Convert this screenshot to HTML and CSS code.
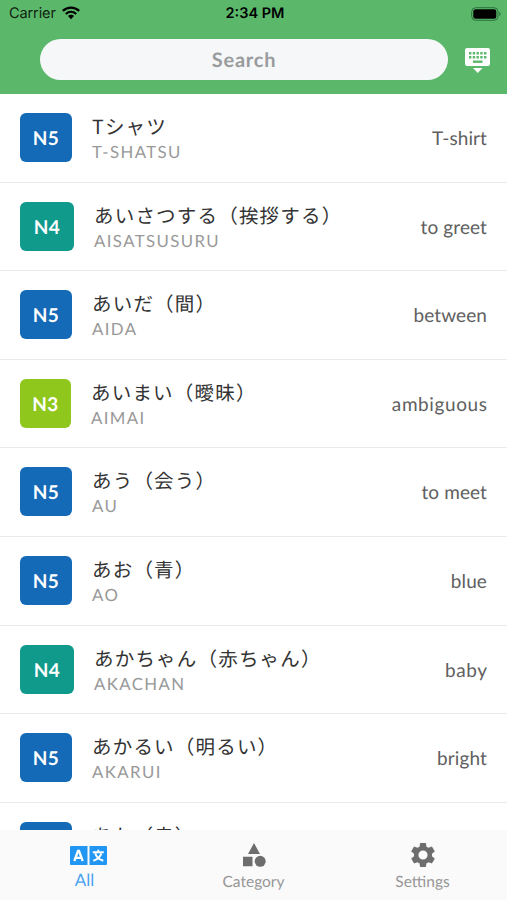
FILE: index.html
```html
<!DOCTYPE html>
<html lang="ja">
<head>
<meta charset="utf-8">
<meta name="viewport" content="width=device-width">
<title>Vocabulary</title>
<link rel="stylesheet" href="styles.css">
</head>
<body>
<header class="header">
  <div class="status">
    <div class="carrier"><span>Carrier</span>
      <svg class="wifi" viewBox="0 0 18 14"><g fill="none" stroke="#000" stroke-width="2.3"><path d="M.8 4.8C5.5.5 12.500 .5 17.200 4.800"/><path d="M3.800 8C6.900 5.200 11.100 5.200 14.200 8"/></g><path d="M9 8.800c-1.200 0-2.200.5-3 1.200l3 3.200 3-3.200c-.8-.7-1.800-1.200-3-1.200z"/></svg>
    </div>
    <div class="time">2:34 PM</div>
    <svg class="battery" viewBox="0 0 30 14"><rect x=".7" y=".7" width="26.300" height="12.600" rx="4" fill="none" stroke="#2c723c"/><rect x="2.300" y="2.300" width="23" height="9.400" rx="2.200"/><path d="M28.300 4.800c1.600.6 1.600 3.800 0 4.400z" fill="#2c723c"/></svg>
  </div>
  <div class="searchbar">
    <div class="search">Search</div>
    <svg class="keyboard" viewBox="0 0 25 25"><rect width="25" height="18" rx="2.200" fill="#fff"/><path d="M8 20h9.500l-4.750 5z" fill="#fff"/><g stroke="#5bb86b" stroke-width="2.400"><path d="M4 5.200h17.500M4 9.200h17.500" stroke-dasharray="2.400 1.350"/><path d="M8 13.700h9.500"/></g></svg>
  </div>
</header>
<main class="list">
  <div class="row"><div class="badge n5">N5</div><div class="word"><div class="jp">Tシャツ</div><div class="romaji">T-SHATSU</div></div><div class="meaning">T-shirt</div></div>
  <div class="row"><div class="badge n4">N4</div><div class="word"><div class="jp">あいさつする（挨拶する）</div><div class="romaji">AISATSUSURU</div></div><div class="meaning">to greet</div></div>
  <div class="row"><div class="badge n5">N5</div><div class="word"><div class="jp">あいだ（間）</div><div class="romaji">AIDA</div></div><div class="meaning">between</div></div>
  <div class="row"><div class="badge n3">N3</div><div class="word"><div class="jp">あいまい（曖昧）</div><div class="romaji">AIMAI</div></div><div class="meaning wide">ambiguous</div></div>
  <div class="row"><div class="badge n5">N5</div><div class="word"><div class="jp">あう（会う）</div><div class="romaji">AU</div></div><div class="meaning">to meet</div></div>
  <div class="row"><div class="badge n5">N5</div><div class="word"><div class="jp">あお（青）</div><div class="romaji">AO</div></div><div class="meaning">blue</div></div>
  <div class="row"><div class="badge n4">N4</div><div class="word"><div class="jp">あかちゃん（赤ちゃん）</div><div class="romaji">AKACHAN</div></div><div class="meaning wide">baby</div></div>
  <div class="row"><div class="badge n5">N5</div><div class="word"><div class="jp">あかるい（明るい）</div><div class="romaji">AKARUI</div></div><div class="meaning">bright</div></div>
  <div class="row"><div class="badge n5"></div><div class="word"><div class="jp">あか（赤）</div></div></div>
</main>
<nav class="tabs">
  <div class="tab active">
    <svg class="icon-all" viewBox="0 0 37 19"><path fill="#2196f3" d="M1 0h16.500v19H1a1 1 0 0 1-1-1V1a1 1 0 0 1 1-1zM19.500 0H36a1 1 0 0 1 1 1v17a1 1 0 0 1-1 1H19.500z"/><g fill="none" stroke="#fff" stroke-width="2"><path d="M4.300 15 8 5h1l3.700 10M5.800 11.800h5.500" stroke-width="2.300"/><path d="M22.800 6.300h11M28.300 3.800v2.500M25.300 7.500c1 3.500 4 6 8 7.300M31.300 7.500c-1 3.500-4 6-8 7.300"/></g></svg>
    <span>All</span>
  </div>
  <div class="tab">
    <svg class="icon-cat" viewBox="0 0 24 24"><path fill="#6d6d6d" d="M12 0 18 11H6zM1 13.700h9.500v9.500H1z"/><circle cx="18.200" cy="18.300" r="5.500" fill="#6d6d6d"/></svg>
    <span>Category</span>
  </div>
  <div class="tab">
    <svg class="icon-set" viewBox="2 2 20 20"><path fill="#6d6d6d" d="M19.430 12.980c.04-.32.070-.64.070-.98s-.03-.66-.07-.98l2.110-1.650c.19-.15.240-.42.120-.64l-2-3.460c-.12-.22-.39-.3-.61-.22l-2.490 1c-.52-.4-1.080-.73-1.690-.98l-.38-2.650A.488.488 0 0 0 14 2h-4c-.25 0-.46.180-.49.420l-.38 2.650c-.61.250-1.170.59-1.690.98l-2.490-1c-.23-.09-.49 0-.61.220l-2 3.460c-.13.220-.07.490.12.640l2.110 1.650c-.04.32-.07.650-.07.980s.03.660.070.980l-2.110 1.650c-.19.150-.24.420-.12.640l2 3.460c.12.220.39.300.61.220l2.490-1c.52.400 1.080.730 1.690.980l.38 2.650c.03.240.24.420.49.420h4c.25 0 .46-.18.490-.42l.38-2.650c.61-.25 1.170-.59 1.690-.98l2.490 1c.23.090.49 0 .61-.22l2-3.460c.12-.22.070-.49-.12-.64zM12 15.800a3.800 3.800 0 1 1 0-7.600 3.800 3.800 0 0 1 0 7.600z"/></svg>
    <span>Settings</span>
  </div>
</nav>
</body>
</html>
```

FILE: styles.css
```css
* { box-sizing: border-box; }
body { margin: 0; height: 900px; display: flex; flex-direction: column; overflow: hidden; background: #fff; font-family: Lato, "Noto Sans CJK JP", sans-serif; text-rendering: geometricPrecision; }
.header { height: 94px; flex: none; background: #5bb86b; }
.status { height: 28px; display: grid; grid-template-columns: 1fr auto 1fr; align-items: center; padding: 0 6px 0 9px; font: 14.5px/28px Inter, sans-serif; color: #10210f; }
.carrier { display: flex; align-items: center; gap: 6px; letter-spacing: -.1px; }
.wifi { width: 18px; height: 14px; margin-top: -2px; }
.time { font-weight: 600; font-size: 14.5px; color: #000; }
.battery { width: 30px; height: 14px; justify-self: end; margin-top: -1px; }
.searchbar { display: flex; padding: 11px 16px 0 40px; }
.search { width: 408px; height: 41px; border-radius: 21px; background: #f5f7f9; color: #999b9d; text-align: center; font-size: 20px; font-weight: 700; line-height: 43px; letter-spacing: .8px; }
.keyboard { width: 25px; height: 25px; margin: 9px 0 0 17px; }
.list { flex: 1; min-height: 0; overflow: hidden; }
.row { height: 88.6px; border-bottom: 1px solid #ebebeb; display: flex; padding: 19px 20px 0; }
.badge { height: 49px; flex: none; border-radius: 6px; color: #fff; font-size: 19px; font-weight: 700; line-height: 52px; text-align: center; letter-spacing: .5px; }
.n5 { width: 52px; background: #146ab6; }
.n4 { width: 54px; background: #109a8c; }
.n3 { width: 51px; background: #8fc71d; }
.word { margin-left: 20px; flex: 1; white-space: nowrap; }
.jp { height: 27px; line-height: 25px; font-family: "Noto Sans CJK JP", sans-serif; font-size: 19.5px; letter-spacing: 1.2px; color: #333; }
.romaji { height: 22px; line-height: 23px; font-size: 16.8px; font-weight: 400; letter-spacing: 1.4px; color: #999; }
.meaning { font-size: 19px; line-height: 52px; color: #606060; font-weight: 400; letter-spacing: .1px; }
.wide { letter-spacing: .6px; margin-right: -.6px; }
.tabs { height: 70px; flex: none; display: grid; grid-template-columns: repeat(3, 1fr); background: #fafafa; }
.tab { display: flex; flex-direction: column; align-items: center; color: #969696; font-size: 15.5px; }
.tab svg { flex: none; }
.tab span { line-height: 20px; margin-top: 5px; }
.active { color: #4da3ee; }
.active span { font-size: 17px; line-height: 20px; }
.icon-all { width: 37px; height: 19px; margin: 15.5px 0 0 8px; }
.icon-cat { width: 24px; height: 24px; margin-top: 13px; }
.icon-set { width: 24px; height: 24px; margin-top: 13px; }
```
